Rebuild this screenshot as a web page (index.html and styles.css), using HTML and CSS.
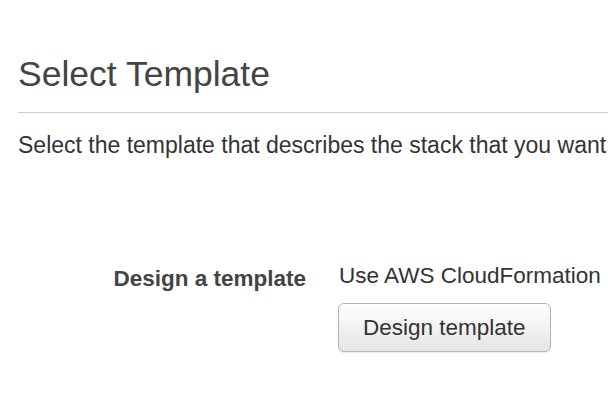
FILE: index.html
```html
<!DOCTYPE html>
<html>
<head>
<meta charset="utf-8">
<link rel="stylesheet" href="styles.css">
</head>
<body>
<div class="page">
  <h1 class="title">Select Template</h1>
  <p class="intro">Select the template that describes the stack that you want</p>
  <div class="row">
    <div class="label">Design a template</div>
    <div class="value">
      <div class="desc">Use AWS CloudFormation</div>
      <button class="btn">Design template</button>
    </div>
  </div>
</div>
</body>
</html>
```

FILE: styles.css
```css
html, body {
  margin: 0;
  padding: 0;
  background: #fff;
}
body {
  font-family: "Liberation Sans", Arial, sans-serif;
  color: #333;
  overflow: hidden;
  width: 608px;
  height: 420px;
}
.page {
  padding: 54px 0 0 18px;
}
.title {
  margin: 0;
  font-size: 35.5px;
  font-weight: normal;
  line-height: 41px;
  color: #444;
  padding-bottom: 17px;
  border-bottom: 1px solid #cfcfcf;
}
.intro {
  margin: 19px 0 0;
  font-size: 23px;
  line-height: 27px;
  white-space: nowrap;
  color: #333;
}
.row {
  display: flex;
  gap: 33px;
  margin-top: 104px;
}
.label {
  width: 288px;
  text-align: right;
  font-weight: bold;
  font-size: 22.5px;
  line-height: 26px;
  padding-top: 3px;
  color: #444;
  flex: none;
}
.value {
  display: flex;
  flex-direction: column;
  align-items: flex-start;
  gap: 14px;
  min-width: 0;
}
.desc {
  font-size: 22.5px;
  line-height: 26px;
  white-space: nowrap;
  color: #333;
}
.btn {
  font-family: "Liberation Sans", Arial, sans-serif;
  font-size: 22.5px;
  color: #333;
  height: 49px;
  padding: 0 24px;
  border: 1px solid #b5b5b5;
  border-radius: 6px;
  background: linear-gradient(#fefefe, #e5e5e5);
  box-shadow: 0 1px 1px rgba(0,0,0,0.08);
  margin-left: -1px;
}
```
